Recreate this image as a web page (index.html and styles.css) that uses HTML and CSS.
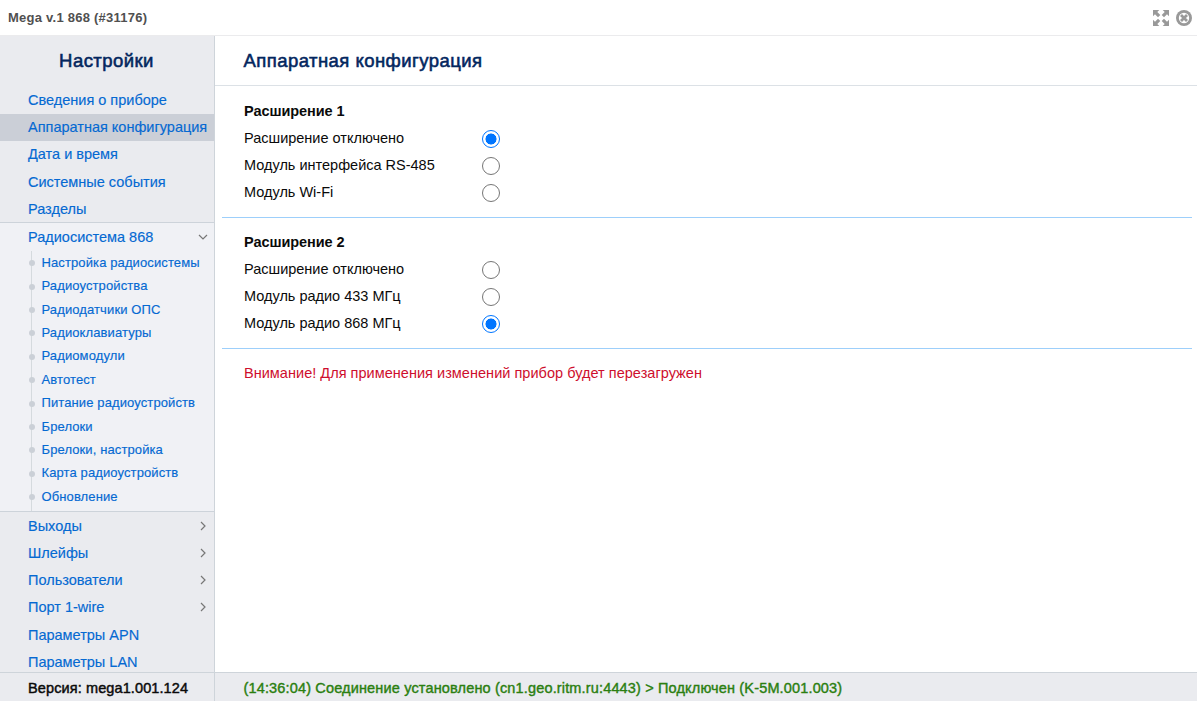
FILE: index.html
```html
<!DOCTYPE html>
<html lang="ru">
<head>
<meta charset="utf-8">
<title>Mega v.1 868</title>
<link rel="stylesheet" href="styles.css">
</head>
<body>
<div class="window">
  <header class="titlebar">
    <span class="device">Mega v.1 868 (#31176)</span>
    <span class="tools">
      <svg class="expand" width="18" height="18" viewBox="0 0 18 18"><g fill="#999"><path d="M1 1h6.300L5.300 3l3 3-2.300 2.300-3-3L1 7.300z"/><path d="M17 1v6.300L15 5.300l-3 3L9.700 6l3-3-2-2z"/><path d="M1 17v-6.300l2 2 3-3L8.300 12l-3 3 2 2z"/><path d="M17 17h-6.300l2-2-3-3L12 9.700l3 3 2-2z"/></g></svg>
      <svg class="close" width="16" height="16" viewBox="0 0 16 16"><circle cx="8" cy="8" r="8" fill="#999"/><circle cx="8" cy="8" r="5.200" fill="#fff"/><path d="M5 5l6 6M11 5l-6 6" stroke="#999" stroke-width="2.800"/></svg>
    </span>
  </header>
  <div class="body">
    <aside class="sidebar">
      <h2 class="side-title">Настройки</h2>
      <nav class="menu">
        <a class="item">Сведения о приборе</a>
        <a class="item active">Аппаратная конфигурация</a>
        <a class="item">Дата и время</a>
        <a class="item">Системные события</a>
        <a class="item">Разделы</a>
        <div class="group">
          <a class="item">Радиосистема 868<svg class="chev" width="10" height="10" viewBox="0 0 10 10"><path d="M1 3l4 4 4-4"/></svg></a>
          <ul class="sub">
            <li>Настройка радиосистемы</li>
            <li>Радиоустройства</li>
            <li>Радиодатчики ОПС</li>
            <li>Радиоклавиатуры</li>
            <li>Радиомодули</li>
            <li>Автотест</li>
            <li>Питание радиоустройств</li>
            <li>Брелоки</li>
            <li>Брелоки, настройка</li>
            <li>Карта радиоустройств</li>
            <li>Обновление</li>
          </ul>
        </div>
        <a class="item">Выходы<svg class="chev" width="10" height="10" viewBox="0 0 10 10"><path d="M3 1l4 4-4 4"/></svg></a>
        <a class="item">Шлейфы<svg class="chev" width="10" height="10" viewBox="0 0 10 10"><path d="M3 1l4 4-4 4"/></svg></a>
        <a class="item">Пользователи<svg class="chev" width="10" height="10" viewBox="0 0 10 10"><path d="M3 1l4 4-4 4"/></svg></a>
        <a class="item">Порт 1-wire<svg class="chev" width="10" height="10" viewBox="0 0 10 10"><path d="M3 1l4 4-4 4"/></svg></a>
        <a class="item">Параметры APN</a>
        <a class="item">Параметры LAN</a>
      </nav>
    </aside>
    <main class="main">
      <h1 class="title">Аппаратная конфигурация</h1>
      <section class="block">
        <h3>Расширение 1</h3>
        <label class="option"><span>Расширение отключено</span><i class="radio on"></i></label>
        <label class="option"><span>Модуль интерфейса RS-485</span><i class="radio"></i></label>
        <label class="option"><span>Модуль Wi-Fi</span><i class="radio"></i></label>
      </section>
      <section class="block">
        <h3>Расширение 2</h3>
        <label class="option"><span>Расширение отключено</span><i class="radio"></i></label>
        <label class="option"><span>Модуль радио 433 МГц</span><i class="radio"></i></label>
        <label class="option"><span>Модуль радио 868 МГц</span><i class="radio on"></i></label>
      </section>
      <p class="warning">Внимание! Для применения изменений прибор будет перезагружен</p>
    </main>
  </div>
  <footer class="status">
    <span class="version">Версия: mega1.001.124</span>
    <span class="connection">(14:36:04) Соединение установлено (cn1.geo.ritm.ru:4443) &gt; Подключен (K-5M.001.003)</span>
  </footer>
</div>
</body>
</html>
```
FILE: styles.css
```css
* { box-sizing: border-box; }
body { margin: 0; background: #fff; font: 14.5px "Liberation Sans", Arial, sans-serif; color: #0a0a0a; }
h1, h2, h3, p, ul { margin: 0; padding: 0; }
.window { display: flex; flex-direction: column; height: 701px; }
.titlebar { display: flex; align-items: center; justify-content: space-between; height: 36px; padding: 0 5px 0 8px; border-bottom: 1px solid #ebebed; }
.device { font-size: 13px; font-weight: bold; letter-spacing: .24px; color: #505050; }
.tools { display: flex; align-items: center; gap: 6px; }
.body { display: flex; flex: 1; min-height: 0; }
.sidebar { width: 215px; background: #eaebef; border-right: 1px solid #ced4da; overflow: hidden; }
.side-title { height: 50.4px; line-height: 50px; text-align: center; font-size: 18.5px; font-weight: normal; letter-spacing: .45px; -webkit-text-stroke: .55px #03265e; color: #03265e; padding-right: 1px; }
.menu { color: #0569d2; -webkit-text-stroke: .15px #0569d2; }
.item { display: flex; align-items: center; justify-content: space-between; height: 27.2px; padding: 0 6px 0 28px; white-space: nowrap; }
.active { background: #cbcfd7; }
.chev { fill: none; stroke: #777; stroke-width: 1.2; }
.group { background: #f0f1f5; border-top: 1px solid #cdd3da; border-bottom: 1px solid #cdd3da; height: 290px; }
.sub { list-style: none; margin-left: 31px; padding-bottom: 3px; border-left: 1px solid #d5dade; font-size: 13px; letter-spacing: .11px; }
.sub li { display: flex; align-items: center; height: 23.42px; white-space: nowrap; }
.sub li::before { content: ""; width: 6px; height: 6px; margin: 2px 7px 0 -3.5px; border-radius: 50%; background: #cbd0d7; }
.main { flex: 1; }
.title { height: 50px; line-height: 50px; padding-left: 28.5px; border-bottom: 1px solid #dce1e6; font-size: 18.5px; font-weight: normal; letter-spacing: .45px; color: #03265e; -webkit-text-stroke: .55px #03265e; }
.block { height: 131px; margin: 0 5px 0 7px; padding: 12px 0 0 22px; border-bottom: 1px solid #9dcffb; }
.title + .block { height: 132px; }
.block + .block { padding-top: 11px; }
.block h3 { height: 26px; line-height: 27px; font-size: 14.5px; letter-spacing: -.07px; }
.option { display: grid; grid-template-columns: 238px 18px; align-items: center; height: 27.2px; }
.radio { width: 18px; height: 18px; margin-top: 2px; border: 1px solid #767676; border-radius: 50%; background: #fff; }
.on { border-color: #0075ff; background: radial-gradient(circle, #0075ff 5.2px, #fff 5.8px); }
.warning { padding: 0 29px; line-height: 49px; letter-spacing: .03px; color: #ce0e2d; }
.status { display: flex; height: 29px; line-height: 30px; background: #eaebef; border-top: 1px solid #ced4da; white-space: nowrap; }
.version { width: 215px; padding-left: 28px; border-right: 1px solid #ced4da; letter-spacing: .11px; -webkit-text-stroke: .45px #0a0a0a; }
.connection { padding-left: 28.5px; color: #2b7f10; letter-spacing: .155px; -webkit-text-stroke: .4px #2b7f10; }
```
